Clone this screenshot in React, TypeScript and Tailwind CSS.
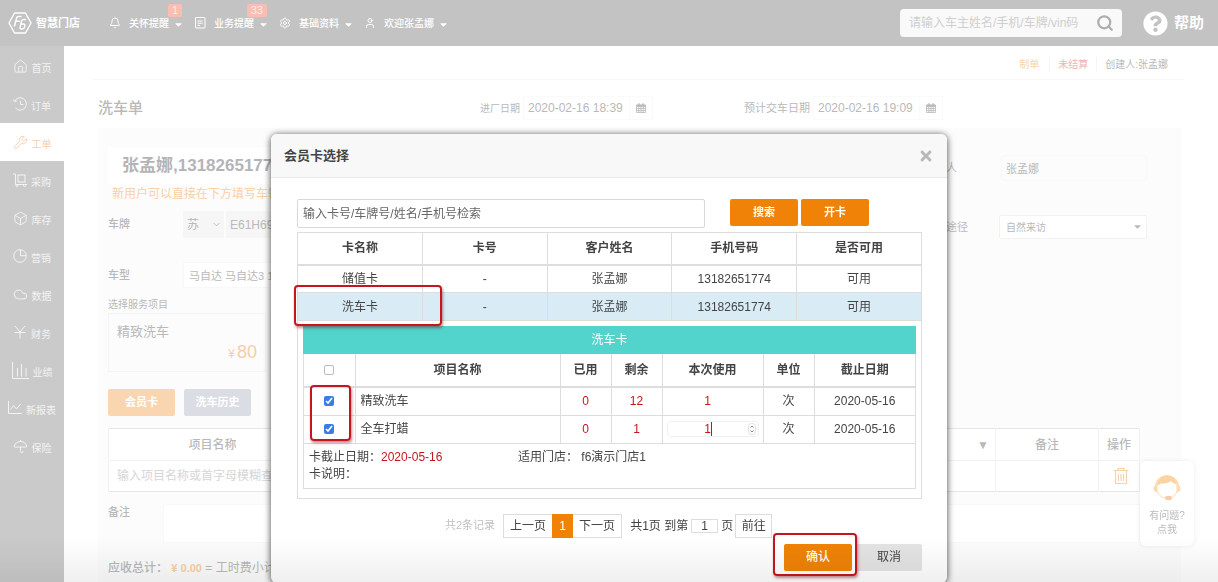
import { useState, type ReactNode } from "react";
import { Bell, Box, ChevronDown, Cloud, House, Search, Settings, Umbrella, User, Wrench } from "lucide-react";
import { FaCaretDown, FaQuestionCircle, FaTimes } from "react-icons/fa";

const CARDS = [
  { name: "储值卡", no: "-", customer: "张孟娜", phone: "13182651774", usable: "可用" },
  { name: "洗车卡", no: "-", customer: "张孟娜", phone: "13182651774", usable: "可用" },
];

const ITEMS = [
  { name: "精致洗车", used: 0, left: 12, unit: "次", expires: "2020-05-16" },
  { name: "全车打蜡", used: 0, left: 1, unit: "次", expires: "2020-05-16" },
];

function Logo() {
  return (
    <svg viewBox="0 0 24 22" className="h-[22px] w-6" fill="none" stroke="#fff" strokeWidth="1.4" strokeLinejoin="round" strokeLinecap="round">
      <path d="M6.500 1h11L23 11l-5.500 10h-11L1 11z" />
      <path d="M13 4.500h-2.500c-1.200 0-1.700.6-2 1.800L6.500 14M7.500 9.300h4" />
      <path d="M17.500 7.500h-2c-1 0-1.600.6-2 1.800l-1.400 5.500c-.3 1.400.2 2.200 1.300 2.200h.9c1.200 0 1.900-.6 2.200-1.800l.3-1.300c.3-1.200-.2-1.900-1.200-1.900h-2.500" />
    </svg>
  );
}

function Receipt() {
  return (
    <svg viewBox="0 0 12 12" className="size-3" fill="none" stroke="currentColor" strokeWidth="1">
      <rect x="1.500" y="0.500" width="9.500" height="10.500" rx="0.500" />
      <path d="M3.500 4h5M3.500 6.200h5M3.500 8.400h2.500" />
    </svg>
  );
}

function Trolley() {
  return (
    <svg viewBox="0 0 14 14" className="size-3.5" fill="none" stroke="currentColor" strokeWidth="1">
      <path d="M0 1h2.500v10.500H14" />
      <rect x="5" y="2" width="7" height="7" />
      <circle cx="4" cy="12.500" r="1" />
      <circle cx="11.500" cy="12.500" r="1" />
    </svg>
  );
}

function Pie() {
  return (
    <svg viewBox="0 0 14 14" className="size-3.5" fill="none" stroke="currentColor" strokeWidth="1">
      <circle cx="7" cy="7" r="6.300" />
      <path d="M7.500.7v6h5.800" />
    </svg>
  );
}

function Yen() {
  return (
    <svg viewBox="0 0 14 14" className="size-3.5" fill="none" stroke="currentColor" strokeWidth="1">
      <path d="M2 1l5 6 5-6M7 7v6.500M1.500 7.500h11" />
    </svg>
  );
}

function Bars() {
  return (
    <svg viewBox="0 0 17 17" className="size-[17px]" fill="none" stroke="currentColor" strokeWidth="1">
      <path d="M.5 0v16.500H17M5.500 6v8.500M9.500 2v12.500M14 6v8.500" />
    </svg>
  );
}

function Trend() {
  return (
    <svg viewBox="0 0 14 14" className="size-3.5" fill="none" stroke="currentColor" strokeWidth="1">
      <path d="M.5 0v12.500H14M2.500 8.500l3-4 3 3.500 4-5" />
    </svg>
  );
}

function History() {
  return (
    <svg viewBox="0 0 14 14" className="size-3.5" fill="none" stroke="currentColor" strokeWidth="1">
      <path d="M1.500 4.500A6.200 6.200 0 1 1 2.500 11M.2 2.500l1.300 2.200 2.300-.7M7.500 4v3.500h3" />
    </svg>
  );
}

function Calendar() {
  return (
    <svg viewBox="0 0 10 10" className="mx-1.5 size-2.5" fill="none" stroke="currentColor" strokeWidth="0.800">
      <path d="M.5 2h9v7.500h-9zM.5 3.500h9M.5 5.500h9M.5 7.500h9M2.800 3.500v6M5 3.500v6M7.200 3.500v6" />
      <path d="M.5 2.500h9M3 .3v2M7 .3v2" strokeWidth="1.300" />
    </svg>
  );
}

function Trash() {
  return (
    <svg viewBox="0 0 16 18" className="h-[18px] w-4" fill="none" stroke="#f8d2ac" strokeWidth="1.200">
      <path d="M.5 3.500h15M5 3.500v-2h6v2M2.500 3.500v13h11v-13M5.500 7v7M8 7v7M10.500 7v7" />
    </svg>
  );
}

function Agent() {
  return (
    <svg viewBox="0 0 28 28" className="size-7">
      <path d="M3 14a11 11 0 0 1 22 0" fill="none" stroke="#fbdcb0" strokeWidth="2" />
      <path d="M4.500 12C5 6 9 3 14 3s9 3 9.500 8c-3 0-4.500-1.500-5-3-3 2-8 3-11 2.500-.6 1-1.500 1.500-3 1.500z" fill="#fbd3a0" />
      <path d="M4.500 11.500v8C2 19 .5 17.500.5 15.500s1.500-3.500 4-4zM23.500 11.500v8c2.500-.5 4-2 4-4s-1.500-3.500-4-4z" fill="#fbdcb0" />
      <path d="M4.500 19c1.500 3.500 4.500 6 8.500 6M24 18.500c-1 3-3.500 5.500-7 6.500" fill="none" stroke="#fbdcb0" />
      <ellipse cx="15.500" cy="25" rx="3.500" ry="2.200" fill="#f8cbaa" />
    </svg>
  );
}

const NAV = [
  { label: "首页", icon: <House size={15} strokeWidth={1.500} /> },
  { label: "订单", icon: <History /> },
  { label: "工单", icon: <Wrench size={15} strokeWidth={1.500} />, active: true },
  { label: "采购", icon: <Trolley /> },
  { label: "库存", icon: <Box size={15} strokeWidth={1.500} /> },
  { label: "营销", icon: <Pie /> },
  { label: "数据", icon: <Cloud size={15} strokeWidth={1.500} /> },
  { label: "财务", icon: <Yen /> },
  { label: "业绩", icon: <Bars /> },
  { label: "新报表", icon: <Trend /> },
  { label: "保险", icon: <Umbrella size={15} strokeWidth={1.500} /> },
];

function MenuItem({ icon, label, badge }: { icon: ReactNode; label: string; badge?: string }) {
  return (
    <button type="button" className="relative flex items-center text-[10px] font-medium">
      {icon}
      <span className="ml-2">{label}</span>
      <FaCaretDown size={11} className="ml-1 -mr-1 mt-0.5" />
      {badge && (
        <span className="absolute -top-3 right-0 translate-x-0.5 rounded-xs bg-[#f9beb2] px-1 text-[11px] leading-[13px] font-normal text-[#fdeae6]">{badge}</span>
      )}
    </button>
  );
}

function TopBar() {
  return (
    <header className="flex h-[46px] shrink-0 items-center bg-[#c3c3c3] pr-[14px] pl-2 text-white">
      <Logo />
      <span className="ml-1 text-[11px] font-bold">智慧门店</span>
      <nav className="ml-[29px] flex gap-[14px]">
        <MenuItem icon={<Bell size={12} strokeWidth={2} />} label="关怀提醒" badge="1" />
        <MenuItem icon={<Receipt />} label="业务提醒" badge="33" />
        <MenuItem icon={<Settings size={12} strokeWidth={2} />} label="基础资料" />
        <MenuItem icon={<User size={12} strokeWidth={2} />} label="欢迎张孟娜" />
      </nav>
      <div className="ml-auto flex h-7 w-[222px] items-center rounded-sm bg-[#f9f9f9] pr-2 pl-[9px]">
        <input
          aria-label="搜索车主"
          placeholder="请输入车主姓名/手机/车牌/vin码"
          className="min-w-0 flex-1 text-xs text-[#aaa] outline-none placeholder:text-[#cfcfcf]"
        />
        <button type="button" aria-label="搜索" className="text-[#aeaeae]">
          <Search size={18} strokeWidth={3} />
        </button>
      </div>
      <a href="#help" className="ml-[21px] flex items-center gap-1.5 text-[15px] font-bold">
        <FaQuestionCircle size={25} />
        帮助
      </a>
    </header>
  );
}

function SideBar() {
  return (
    <nav className="w-16 shrink-0 bg-[#cacaca] pt-px text-[10px] text-[#f3f3f3]">
      {NAV.map((n) => (
        <a
          key={n.label}
          href={`#${n.label}`}
          className={n.active ? "flex h-[38px] items-center justify-center gap-1 bg-white text-[#f6cfae]" : "flex h-[38px] items-center justify-center gap-1"}
        >
          {n.icon}
          <span className="pt-1">{n.label}</span>
        </a>
      ))}
    </nav>
  );
}

function DateField({ id, label, value, small }: { id: string; label: string; value: string; small?: boolean }) {
  return (
    <div className="flex items-center">
      <label htmlFor={id} className={small ? "text-[10px]" : "text-[11px]"}>{label}</label>
      <div className="ml-[3px] flex h-6 items-center border border-[#fafafa]">
        <input id={id} defaultValue={value} className="h-full w-[106px] border-r border-[#fafafa] pl-1 text-xs outline-none" />
        <Calendar />
      </div>
    </div>
  );
}

function WorkOrder() {
  return (
    <main className="min-w-0 flex-1 bg-white pr-[35px] pl-[29px] text-[11px] text-[#b9b9b9]">
      <div className="flex h-[34px] items-center justify-end border-b border-[#f8f8f8] pt-1 pr-[15px] text-[10px]">
        <span className="pr-2.5 text-[#fad3a8]">制单</span>
        <span className="border-x border-[#f5f5f5] px-2 text-[#eeb4b4]">未结算</span>
        <span className="pl-2">创建人:张孟娜</span>
      </div>
      <div className="grid h-12 grid-cols-[382px_264px_1fr] items-center pt-2 pl-[5px]">
        <h1 className="text-[15px] font-medium">洗车单</h1>
        <DateField id="entry" label="进厂日期" value="2020-02-16 18:39" small />
        <DateField id="due" label="预计交车日期" value="2020-02-16 19:09" />
      </div>

      <section className="mr-0.5 ml-[5px] h-full bg-[#fcfcfc] pl-2.5">
        <div className="flex pr-[34px]">
          <div className="min-w-0 flex-1 pt-[19px]">
            <div className="flex h-[37px] items-center bg-white pl-3.5 text-[17px] font-bold text-[#b4b4b8]">张孟娜,13182651774</div>
            <p className="h-5 pl-1 text-xs leading-5 text-[#fad0a6]">新用户可以直接在下方填写车辆信息</p>
            <div className="mt-[7px] flex h-[27px] items-center">
              <label htmlFor="plate" className="w-[75px] font-medium">车牌</label>
              <div className="relative mr-0.5 h-full w-[41px] bg-[#f6f6f6]">
                <select aria-label="省份" className="h-full w-full appearance-none pl-1 text-xs">
                  <option>苏</option>
                </select>
                <ChevronDown size={11} className="pointer-events-none absolute top-2 right-0.5" />
              </div>
              <input id="plate" defaultValue="E61H69" className="h-full w-[200px] bg-[#f6f6f6] pl-1 text-xs" />
            </div>
            <div className="mt-6 flex h-[26px] items-center">
              <label htmlFor="model" className="w-[75px] font-medium">车型</label>
              <input id="model" defaultValue="马自达 马自达3 1.6L" className="h-full w-[200px] border border-[#f8f8f8] bg-white pl-[5px] text-[11px]" />
            </div>
            <h2 className="mt-2 h-[17px] text-[10px] leading-[17px]">选择服务项目</h2>
            <div className="h-[59px] w-[158px] border border-[#f5f5f5] px-2 pt-2 text-[13px] leading-5">
              <div>精致洗车</div>
              <div className="text-right text-lg leading-5 text-[#f9ccaa]"><span className="pr-0.5 text-xs">¥</span>80</div>
            </div>
          </div>
          <div className="w-[223px] pt-[27px]">
            <div className="flex h-[26px] items-center">
              <label htmlFor="sender" className="w-[77px]">送修人</label>
              <input id="sender" defaultValue="张孟娜" className="h-full min-w-0 flex-1 rounded-sm border border-[#f8f8f8] pl-1" />
            </div>
            <div className="mt-[34px] flex h-6 items-center">
              <label htmlFor="source" className="w-[75px]">来店途径</label>
              <div className="relative h-full min-w-0 flex-1">
                <select id="source" className="h-full w-full appearance-none rounded-xs border border-[#f2f2f2] bg-white pl-1.5 text-[10px]">
                  <option>自然来访</option>
                </select>
                <FaCaretDown size={11} className="pointer-events-none absolute top-1.5 right-1" />
              </div>
            </div>
          </div>
        </div>

        <div className="mt-[17px] flex gap-[9px] text-[11px] font-bold text-white">
          <button type="button" className="h-[27px] w-[67px] rounded-xs bg-[#fad6b0]">会员卡</button>
          <button type="button" className="h-[27px] w-[67px] rounded-xs bg-[#dadde4]">洗车历史</button>
        </div>

        <div className="mt-3 pr-[41px]">
          <table className="w-full table-fixed border-y border-[#e6e6e6] bg-white text-xs">
            <thead>
              <tr className="h-8 border-b border-[#f2f2f2]">
                <th className="w-[256px] border-x border-[#f2f2f2] pr-12 font-medium">项目名称</th>
                <th className="border-r border-[#f2f2f2] pr-1.5 text-right font-medium">▼</th>
                <th className="w-[103px] border-r border-[#f2f2f2] font-medium">备注</th>
                <th className="w-[41px] border-r border-[#f2f2f2] font-medium">操作</th>
              </tr>
            </thead>
            <tbody>
              <tr className="h-[31px]">
                <td className="border-x border-[#f2f2f2] pl-2">
                  <input aria-label="项目名称" placeholder="输入项目名称或首字母模糊查询" className="w-full placeholder:text-[#d6d6d6]" />
                </td>
                <td className="border-r border-[#f2f2f2]" />
                <td className="border-r border-[#f2f2f2]" />
                <td className="border-r border-[#f2f2f2] pl-1">
                  <button type="button" aria-label="删除" className="mx-auto block"><Trash /></button>
                </td>
              </tr>
            </tbody>
          </table>
        </div>

        <div className="mt-3 flex pr-[41px]">
          <label htmlFor="remark" className="w-[55px] font-medium">备注</label>
          <textarea id="remark" className="h-[39px] flex-1 resize-none border border-[#f9f9f9] bg-white" />
        </div>
        <p className="mt-4 text-xs leading-[18px]">
          <b className="font-medium">应收总计：</b> <b className="text-[11px] text-[#fad0a6]">¥ 0.00</b> = 工时费小计：
        </p>
      </section>
    </main>
  );
}

// red frame that points out a step
function Mark({ className }: { className: string }) {
  return <span className={`pointer-events-none absolute z-10 rounded-sm border-2 border-[#c4161f] shadow-[1px_2px_3px_rgba(120,0,0,0.45)] ${className}`} />;
}

function CardDetail() {
  const [all, setAll] = useState(false);
  const [checked, setChecked] = useState([true, true]);
  const [uses, setUses] = useState(["1", "1"]);

  return (
    <div className="border border-[#ddd]">
      <h3 className="-mx-px -mt-px h-7 bg-[#52d3cb] text-center leading-7 text-white">洗车卡</h3>
      <table className="w-full table-fixed text-center [&_td]:border-r [&_td]:border-[#ddd] [&_td:last-child]:border-r-0 [&_th]:border-r [&_th]:border-[#ddd] [&_th:last-child]:border-r-0">
        <thead>
          <tr className="h-[33px] border-b-2 border-[#ddd]">
            <th className="w-[51px]">
              <input
                type="checkbox"
                aria-label="全选"
                checked={all}
                onChange={(e) => setAll(e.target.checked)}
                className="mx-auto block size-2.5 appearance-none rounded-xs border border-[#bbb] bg-white checked:bg-[#3a7ce6]"
              />
            </th>
            <th>项目名称</th>
            <th className="w-[51px]">已用</th>
            <th className="w-[51px]">剩余</th>
            <th className="w-[101px]">本次使用</th>
            <th className="w-[51px]">单位</th>
            <th className="w-[101px]">截止日期</th>
          </tr>
        </thead>
        <tbody>
          {ITEMS.map((item, i) => (
            <tr key={item.name} className="h-7 border-b border-[#ddd]">
              <td className="relative">
                <input
                  type="checkbox"
                  aria-label={item.name}
                  checked={checked[i]}
                  onChange={() => setChecked(checked.map((c, j) => (j === i ? !c : c)))}
                  className="mx-auto block size-2.5 accent-[#3a7ce6]"
                />
                {i === 0 && <Mark className="-top-[3px] right-1 left-1.5 h-[56px]" />}
              </td>
              <td className="pl-[5px] text-left">{item.name}</td>
              <td className="font-medium text-[#c4161f]">{item.used}</td>
              <td className="font-medium text-[#c4161f]">{item.left}</td>
              <td className="px-1">
                <div className={i === 1 ? "relative h-4 rounded-sm border border-[#f0f0f0]" : "relative h-4 border border-transparent"}>
                  <input
                    type="number"
                    aria-label={`${item.name} 本次使用`}
                    value={uses[i]}
                    onChange={(e) => setUses(uses.map((u, j) => (j === i ? e.target.value : u)))}
                    className="block h-full w-full appearance-none pr-2.5 text-center text-[#c4161f] outline-none [-moz-appearance:textfield] [&::-webkit-inner-spin-button]:appearance-none"
                  />
                  {i === 1 && (
                    <>
                      <span className="absolute top-0 left-[43px] h-3.5 w-px bg-[#c4161f]" />
                      <svg viewBox="0 0 8 12" className="absolute top-px right-0.5 h-3 w-2" fill="none" stroke="#777" strokeWidth="0.900">
                        <rect x="0.500" y="0.500" width="7" height="11" rx="3" stroke="#ddd" />
                        <path d="M2.500 4.500L4 3l1.500 1.500M2.500 7.500L4 9l1.500-1.500" />
                      </svg>
                    </>
                  )}
                </div>
              </td>
              <td>{item.unit}</td>
              <td>{item.expires}</td>
            </tr>
          ))}
        </tbody>
      </table>
      <div className="h-11 px-[5px] pt-[5px] text-left leading-[17px]">
        <div className="flex">
          <span className="w-[209px]">卡截止日期：<span className="font-medium text-[#c4161f]">2020-05-16</span></span>
          <span>适用门店： f6演示门店1</span>
        </div>
        <div>卡说明：</div>
      </div>
    </div>
  );
}

function Pager() {
  return (
    <div className="mt-[15px] flex items-center pl-[148px]">
      <span className="text-[11px] text-[#c2c2c2]">共2条记录</span>
      <div className="ml-2 flex h-6 border border-[#ddd]">
        <button type="button" className="w-12">上一页</button>
        <button type="button" className="-my-px w-[21px] bg-[#f08307] text-white">1</button>
        <button type="button" className="w-12">下一页</button>
      </div>
      <label htmlFor="page" className="ml-2">共1页 到第</label>
      <input id="page" defaultValue="1" className="mx-[3px] h-3.5 w-[27px] border border-[#ddd] text-center" />
      <span>页</span>
      <button type="button" className="ml-0.5 h-6 w-[37px] border border-[#ddd]">前往</button>
    </div>
  );
}

function CardDialog() {
  return (
    <div className="fixed inset-0 flex items-start justify-center overflow-hidden pt-[134px]">
      <div role="dialog" aria-labelledby="dialog-title" className="w-[676px] rounded-md bg-white text-xs text-[#444] shadow-[0_1px_7px_rgba(0,0,0,0.75)]">
        <div className="flex h-11 items-center justify-between rounded-t-md border-b border-[#e8e8e8] bg-[#f8f8f8] px-[13px]">
          <h2 id="dialog-title" className="text-[13px] font-bold">会员卡选择</h2>
          <button type="button" aria-label="关闭" className="text-[#b8b8b8]"><FaTimes size={16} /></button>
        </div>
        <div className="pt-[21px] pr-[25px] pb-3 pl-[26px]">
          <div className="flex text-[11px] font-bold text-white">
            <input
              aria-label="检索会员卡"
              placeholder="输入卡号/车牌号/姓名/手机号检索"
              className="h-[29px] w-[408px] rounded-xs border border-[#d8d8d8] pl-[5px] text-xs font-normal text-[#444] outline-none placeholder:text-[#666]"
            />
            <button type="button" className="ml-[25px] h-[27px] w-[68px] rounded-xs bg-[#f08307]">搜索</button>
            <button type="button" className="ml-[3px] h-[27px] w-[68px] rounded-xs bg-[#f08307]">开卡</button>
          </div>

          <table className="mt-1 w-full table-fixed border border-[#ddd] text-center">
            <thead>
              <tr className="h-8 border-b-2 border-[#ddd]">
                <th className="border-r border-[#ddd]">卡名称</th>
                <th className="border-r border-[#ddd]">卡号</th>
                <th className="border-r border-[#ddd]">客户姓名</th>
                <th className="border-r border-[#ddd]">手机号码</th>
                <th>是否可用</th>
              </tr>
            </thead>
            <tbody>
              {CARDS.map((card, i) => (
                <tr key={card.name} className={i === 1 ? "h-7 border-b border-[#ddd] bg-[#d9ebf5]" : "h-7 border-b border-[#ddd]"}>
                  <td className="relative border-r border-[#ddd]">
                    {card.name}
                    {i === 1 && <Mark className="-top-2 -right-5 -bottom-1.5 -left-1" />}
                  </td>
                  <td className="border-r border-[#ddd]">{card.no}</td>
                  <td className="border-r border-[#ddd]">{card.customer}</td>
                  <td className="border-r border-[#ddd]">{card.phone}</td>
                  <td>{card.usable}</td>
                </tr>
              ))}
              <tr>
                <td colSpan={5} className="px-[5px] pt-[5px] pb-[9px]"><CardDetail /></td>
              </tr>
            </tbody>
          </table>

          <Pager />

          <div className="mt-1.5 flex justify-end gap-1">
            <div className="relative">
              <button type="button" className="h-[27px] w-[68px] rounded-xs bg-[#f08307] font-medium text-white">确认</button>
              <Mark className="-top-[11px] -right-[5px] -bottom-[5px] -left-[11px]" />
            </div>
            <button type="button" className="h-[27px] w-[66px] rounded-xs bg-[#e4e4e4]">取消</button>
          </div>
        </div>
      </div>
    </div>
  );
}

export default function App() {
  return (
    <div className="flex h-screen flex-col overflow-hidden font-['Liberation_Sans','Noto_Sans_CJK_SC',sans-serif]">
      <TopBar />
      <div className="flex min-h-0 flex-1">
        <SideBar />
        <WorkOrder />
      </div>
      <a href="#support" className="fixed right-6 bottom-9 flex h-[85px] w-[54px] flex-col items-center rounded-md bg-white pt-3 text-center text-[10px] leading-[14px] text-[#bbb] shadow-[0_0_5px_rgba(0,0,0,0.08)]">
        <Agent />
        <span className="mt-2">有问题?</span>
        <span>点我</span>
      </a>
      <CardDialog />
      <div className="pointer-events-none fixed inset-x-0 bottom-0 h-11 bg-linear-to-t from-black/6 to-transparent" />
    </div>
  );
}
